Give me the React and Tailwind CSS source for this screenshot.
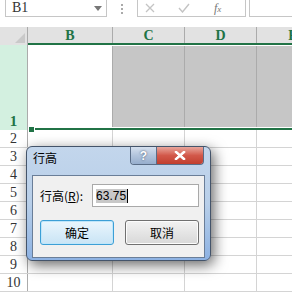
import React from "react";

const serif = { fontFamily: '"Liberation Serif", "DejaVu Serif", serif' };
const cjk = { fontFamily: '"Noto Sans CJK SC", "Liberation Sans", sans-serif' };

export default function App() {
  const rows = [2, 3, 4, 5, 6, 7, 8, 9, 10];
  return (
    <div className="relative w-[292px] h-[292px] overflow-hidden bg-white select-none">
      {/* top toolbar */}
      <div className="flex h-[27px] items-start">
        <div className="ml-[5px] w-[102px] h-[17px] border border-t-0 border-[#c6c6c6] flex items-center justify-between pl-[6px] pr-[4px]">
          <span className="text-[14px] leading-none text-[#333]" style={serif}>B1</span>
          <svg width="8" height="5" viewBox="0 0 8 5"><path d="M0 0 L8 0 L4 5 Z" fill="#777" /></svg>
        </div>
        <div className="w-[30px] h-[17px] flex flex-col items-center justify-center gap-[2px]">
          <div className="w-[2px] h-[2px] bg-[#aaa]" />
          <div className="w-[2px] h-[2px] bg-[#aaa]" />
          <div className="w-[2px] h-[2px] bg-[#aaa]" />
        </div>
        <div className="w-[109px] h-[17px] border border-t-0 border-[#c6c6c6] flex items-center">
          <svg className="ml-[7px]" width="10" height="10" viewBox="0 0 10 10"><path d="M1 1 L9 9 M9 1 L1 9" stroke="#c4c4c4" strokeWidth="1.3" /></svg>
          <svg className="ml-[23px]" width="12" height="10" viewBox="0 0 12 10"><path d="M1 5 L4.5 9 L11 1" stroke="#c4c4c4" strokeWidth="1.4" fill="none" /></svg>
          <span className="ml-[24px] text-[12px] italic text-[#777] leading-none" style={serif}>f<span className="text-[9px]">x</span></span>
        </div>
        <div className="ml-[3px] flex-1 h-[17px] border border-t-0 border-r-0 border-[#c6c6c6]" />
      </div>

      {/* column headers */}
      <div className="flex h-[18px] bg-[#e2e2e2]">
        <div className="w-[28px] shrink-0 h-[18px] border-r border-[#ababab] relative">
          <svg className="absolute right-[2px] bottom-[2px]" width="10" height="10" viewBox="0 0 10 10"><path d="M10 0 L10 10 L0 10 Z" fill="#c9c9c9" /></svg>
        </div>
        <div className="flex-1 flex border-b-2 border-[#217346] overflow-hidden">
          <div className="w-[85px] shrink-0 flex items-center justify-center border-r border-[#ababab] text-[14px] font-bold text-[#217346]" style={serif}>B</div>
          <div className="w-[72px] shrink-0 flex items-center justify-center border-r border-[#ababab] text-[14px] font-bold text-[#217346]" style={serif}>C</div>
          <div className="w-[72px] shrink-0 flex items-center justify-center border-r border-[#ababab] text-[14px] font-bold text-[#217346]" style={serif}>D</div>
          <div className="w-[72px] shrink-0 flex items-center justify-center text-[14px] font-bold text-[#217346]" style={serif}>E</div>
        </div>
      </div>

      {/* row 1 */}
      <div className="flex h-[85px]">
        <div className="w-[28px] bg-[#d3f0e0] border-r border-[#ababab] flex items-end justify-center pb-[1px]">
          <span className="text-[15px] leading-none font-bold text-[#217346]" style={serif}>1</span>
        </div>
        <div className="flex-1 flex flex-col">
          <div className="flex-1 flex pt-[1px]">
            <div className="w-[85px] bg-white border-r border-[#ababab]" />
            <div className="w-[72px] bg-[#c6c6c6] border-r border-[#ababab]" />
            <div className="w-[72px] bg-[#c6c6c6] border-r border-[#ababab]" />
            <div className="flex-1 bg-[#c6c6c6]" />
          </div>
          <div className="h-[1px] bg-white" />
          <div className="h-[2px] flex items-center">
            <div className="w-[5px] h-[5px] bg-[#217346] ml-[1px]" />
            <div className="w-[1px]" />
            <div className="flex-1 h-[2px] bg-[#217346]" />
          </div>
        </div>
      </div>

      {/* rows 2-10 */}
      {rows.map((r) => (
        <div key={r} className="flex h-[18px] border-b border-[#d4d4d4]">
          <div className="w-[28px] bg-white border-r border-[#ababab] flex items-center justify-center">
            <span className="text-[14px] leading-none text-[#333]" style={serif}>{r}</span>
          </div>
          <div className="w-[85px] border-r border-[#d4d4d4]" />
          <div className="w-[72px] border-r border-[#d4d4d4]" />
          <div className="w-[72px] border-r border-[#d4d4d4]" />
          <div className="flex-1" />
        </div>
      ))}

      {/* dialog */}
      <div className="absolute left-[26px] top-[146px] w-[185px] h-[115px] rounded-[6px] border border-[#44546a] bg-gradient-to-b from-[#c3d6ec] via-[#b8cfe9] to-[#8db2e3] shadow-[3px_4px_14px_rgba(0,0,0,0.6)]">
        <div className="flex h-[28px] items-start">
          <span className="ml-[6px] mt-[5px] text-[12px] leading-none text-black" style={cjk}>行高</span>
          <div className="flex-1" />
          <div className="mr-[6px] flex h-[18px] rounded-b-[4px] overflow-hidden border border-t-0 border-[#5a6d87]">
            <div className="w-[26px] h-full bg-gradient-to-b from-[#d5e0ee] via-[#b2c4dc] to-[#97aecd] border-r border-[#5a6d87] flex items-center justify-center">
              <span className="text-[12px] font-bold text-white leading-none [text-shadow:0_0_2px_#34465e]" style={{ fontFamily: '"Liberation Sans", sans-serif' }}>?</span>
            </div>
            <div className="w-[46px] h-full bg-gradient-to-b from-[#e7a59c] via-[#d2584a] to-[#c13f2f] flex items-center justify-center">
              <svg width="12" height="9" viewBox="0 0 12 9"><path d="M2 1 L10 8 M10 1 L2 8" stroke="#fff" strokeWidth="2.4" strokeLinecap="square" /><path d="M2 1 L10 8 M10 1 L2 8" stroke="#fff" strokeWidth="2" /></svg>
            </div>
          </div>
        </div>
        <div className="mx-[5px] h-[83px] bg-[#f0f0f0] border border-[#6a7e98] flex flex-col" style={cjk}>
          <div className="flex items-center mt-[8px] ml-[7px]">
            <span className="text-[12px] text-black leading-none">行高(<span className="underline">R</span>):</span>
            <div className="ml-[9px] w-[107px] h-[23px] bg-white border border-[#a9a9a9] flex items-center pl-[3px]">
              <span className="text-[12px] leading-[14px] bg-[#c8c8c8] text-black pr-[1px]" style={{ fontFamily: '"Liberation Sans", sans-serif' }}>63.75</span>
              <div className="w-[1px] h-[14px] bg-black" />
            </div>
          </div>
          <div className="flex mt-[13px] ml-[7px] gap-[11px]">
            <div className="w-[74px] h-[25px] rounded-[3px] border border-[#3c9fd6] bg-gradient-to-b from-[#eaf6fd] to-[#c9e4f5] flex items-center justify-center shadow-[inset_0_0_0_1px_#bfe6fa]">
              <span className="text-[12px] text-black leading-none">确定</span>
            </div>
            <div className="w-[74px] h-[25px] rounded-[3px] border border-[#707070] bg-gradient-to-b from-[#f2f2f2] to-[#d8d8d8] flex items-center justify-center shadow-[inset_0_0_0_1px_#fcfcfc]">
              <span className="text-[12px] text-black leading-none">取消</span>
            </div>
          </div>
        </div>
      </div>
    </div>
  );
}
